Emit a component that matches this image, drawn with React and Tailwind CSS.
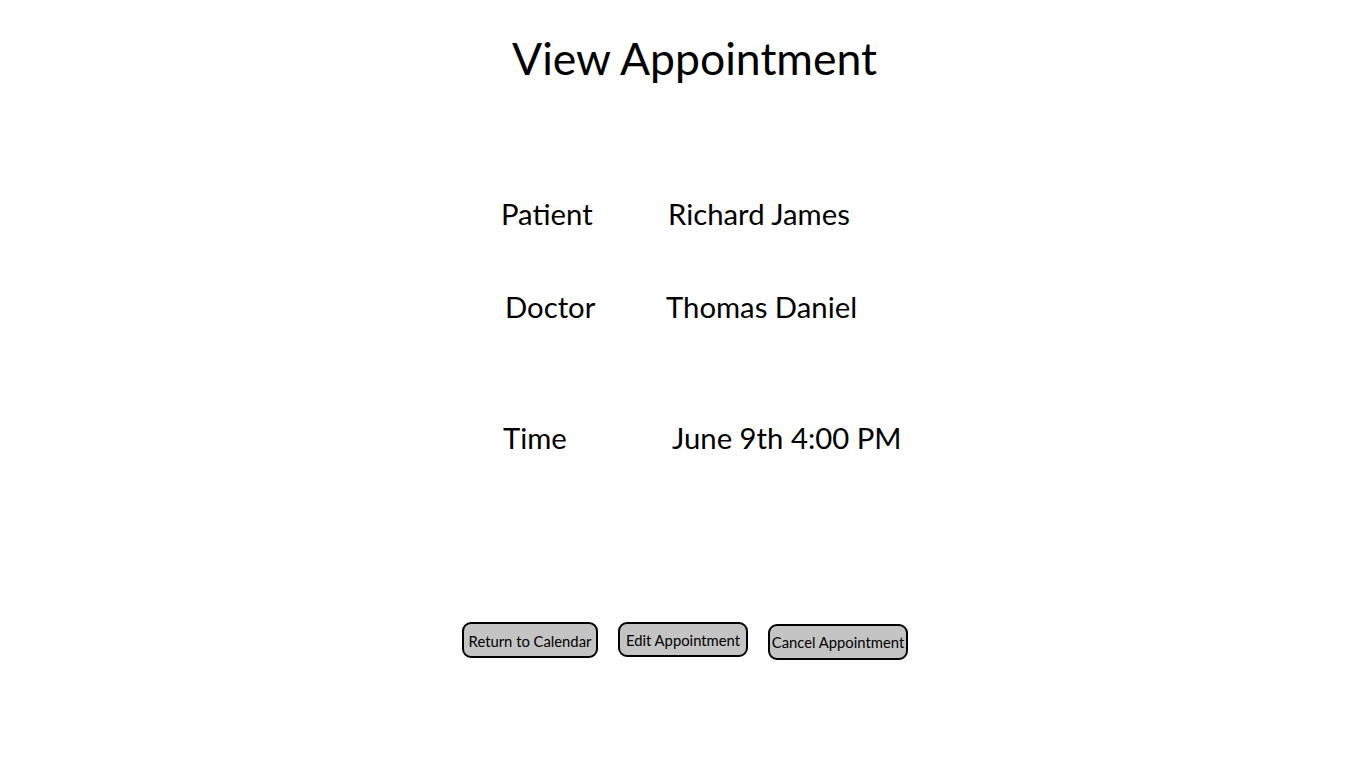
import React from "react";

export default function App() {
  return (
    <div className="w-[1366px] h-[768px] bg-white text-black font-['Lato',sans-serif] overflow-hidden">
      <h1 className="pt-[30px] pl-[512px] text-[44.5px] leading-[56px]">View Appointment</h1>
      <div className="mt-[111px] text-[29.3px] leading-[34px]">
        <div className="flex items-baseline">
          <div className="pl-[501px] w-[668px] shrink-0">Patient</div>
          <div>Richard James</div>
        </div>
        <div className="flex items-baseline mt-[59px]">
          <div className="pl-[505px] w-[666px] shrink-0">Doctor</div>
          <div>Thomas Daniel</div>
        </div>
        <div className="flex items-baseline mt-[97px]">
          <div className="pl-[503px] w-[672px] shrink-0">Time</div>
          <div>June 9th 4:00 PM</div>
        </div>
      </div>
      <div className="flex items-start mt-[167px] pl-[462px] text-[14.8px]">
        <button className="w-[136px] h-[36px] pt-[2px] rounded-[9px] border-2 border-black bg-[#c4c4c4] leading-none">Return to Calendar</button>
        <button className="ml-[20px] w-[130px] h-[35px] pt-[2px] rounded-[9px] border-2 border-black bg-[#c4c4c4] leading-none">Edit Appointment</button>
        <button className="ml-[20px] mt-[2px] w-[140px] h-[36px] pt-[1px] rounded-[9px] border-2 border-black bg-[#c4c4c4] leading-none">Cancel Appointment</button>
      </div>
    </div>
  );
}
